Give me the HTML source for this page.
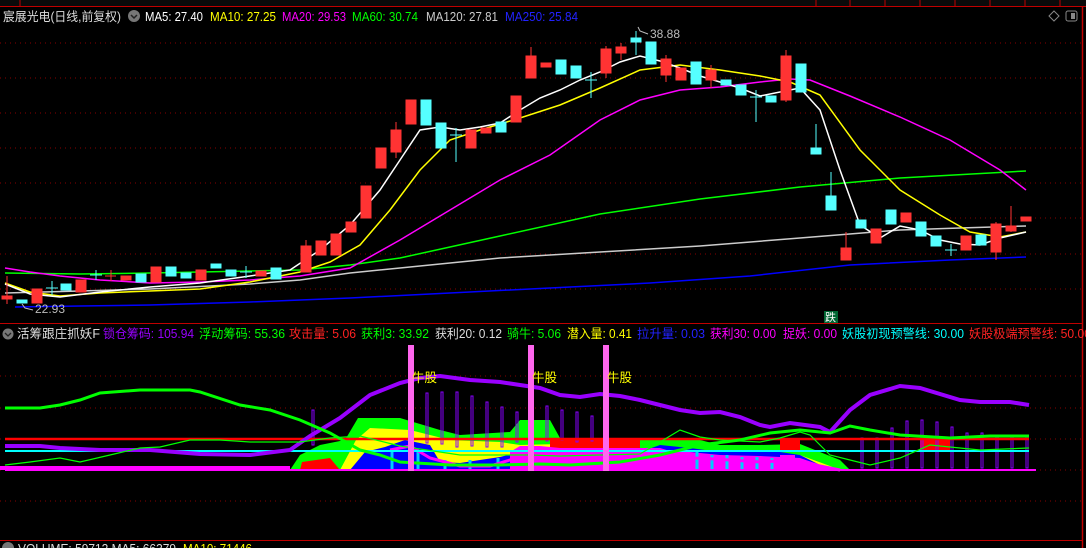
<!DOCTYPE html><html><head><meta charset="utf-8"><style>
html,body{margin:0;padding:0;background:#000;width:1086px;height:548px;overflow:hidden}
svg{display:block}
text{font-family:"Liberation Sans","Noto Sans CJK SC",sans-serif}
</style></head><body>
<svg width="1086" height="548" viewBox="0 0 1086 548" xmlns="http://www.w3.org/2000/svg">
<rect width="1086" height="548" fill="#000"/>
<rect x="0" y="0" width="1086" height="6" fill="#0a0a0a"/>
<line x1="0" y1="6.5" x2="1086" y2="6.5" stroke="#c00000"/>
<g stroke="#c00000"><line x1="20" y1="0" x2="20" y2="6"/><line x1="816" y1="0" x2="816" y2="6"/><line x1="850" y1="0" x2="850" y2="6"/><line x1="885" y1="0" x2="885" y2="6"/><line x1="920" y1="0" x2="920" y2="6"/><line x1="955" y1="0" x2="955" y2="6"/><line x1="990" y1="0" x2="990" y2="6"/><line x1="1025" y1="0" x2="1025" y2="6"/><line x1="1060" y1="0" x2="1060" y2="6"/></g>
<line x1="1082.5" y1="6" x2="1082.5" y2="548" stroke="#c00000" stroke-width="1.5"/>
<g font-size="12.5">
<text x="3" y="21" fill="#ddd" textLength="118" lengthAdjust="spacingAndGlyphs">宸展光电(日线,前复权)</text>
<text x="145" y="21" fill="#fff" textLength="58" lengthAdjust="spacingAndGlyphs">MA5: 27.40</text>
<text x="210" y="21" fill="#ff0" textLength="66" lengthAdjust="spacingAndGlyphs">MA10: 27.25</text>
<text x="282" y="21" fill="#f0f" textLength="64" lengthAdjust="spacingAndGlyphs">MA20: 29.53</text>
<text x="352" y="21" fill="#0f0" textLength="66" lengthAdjust="spacingAndGlyphs">MA60: 30.74</text>
<text x="426" y="21" fill="#ccc" textLength="72" lengthAdjust="spacingAndGlyphs">MA120: 27.81</text>
<text x="505" y="21" fill="#22f" textLength="73" lengthAdjust="spacingAndGlyphs">MA250: 25.84</text>
</g>
<circle cx="134" cy="16" r="6" fill="#777"/><path d="M131 15 l3 3 l3 -3" stroke="#222" fill="none" stroke-width="1.5"/>
<path d="M1054 11 l5 5 l-5 5 l-5 -5z" stroke="#888" fill="none"/>
<rect x="1066" y="11" width="11" height="10" rx="2" stroke="#888" fill="none"/><rect x="1071" y="13" width="4" height="6" fill="#888"/>
<g stroke="#800" stroke-dasharray="1,4">
<line x1="0" y1="43" x2="1082" y2="43"/><line x1="0" y1="78" x2="1082" y2="78"/><line x1="0" y1="113" x2="1082" y2="113"/><line x1="0" y1="148" x2="1082" y2="148"/><line x1="0" y1="183" x2="1082" y2="183"/><line x1="0" y1="218" x2="1082" y2="218"/><line x1="0" y1="254" x2="1082" y2="254"/><line x1="0" y1="289" x2="1082" y2="289"/>
</g>
<polyline fill="none" stroke="#00f" stroke-width="1.5" points="15,307 80,306 150,305 250,302 350,298 450,293 550,288 650,283 750,276 850,265 950,260 1026,257"/>
<polyline fill="none" stroke="#ccc" stroke-width="1.5" points="5,293 80,291 150,289 250,284 300,280 350,273 400,268 450,263 500,258 600,252 700,246 800,238 900,230 960,228 1026,226"/>
<polyline fill="none" stroke="#0f0" stroke-width="1.5" points="5,273 80,274 150,273 250,271 300,270 350,265 400,258 450,247 500,236 600,214 700,199 800,187 900,178 1026,171"/>
<polyline fill="none" stroke="#f0f" stroke-width="1.5" points="5,268 30,272 60,276 100,280 150,283 200,282 250,280 300,276 350,268 400,240 450,210 500,180 550,155 600,120 640,100 680,90 720,87 760,82 790,79 810,80 850,96 900,117 950,140 1000,170 1026,190"/>
<polyline fill="none" stroke="#ff0" stroke-width="1.5" points="5,283 30,292 60,296 100,293 150,291 200,289 250,282 300,272 330,262 360,245 390,210 420,170 450,140 480,130 520,118 560,105 600,88 640,70 680,65 720,70 760,76 790,82 820,95 860,150 900,190 940,215 970,232 1000,237 1026,232"/>
<polyline fill="none" stroke="#fff" stroke-width="1.5" points="5,284 30,294 60,297 100,292 150,287 200,283 250,276 290,270 320,250 350,225 380,190 400,160 420,130 440,127 460,130 480,127 500,123 520,110 540,98 560,90 580,80 600,72 620,62 640,56 660,61 680,68 700,76 720,82 740,88 760,96 780,92 800,88 820,110 840,170 860,225 880,238 900,226 920,230 940,240 960,244 980,245 1000,238 1026,232"/>
<g stroke-width="1">
<g fill="#f33" stroke="#f33">
<line x1="7" y1="276" x2="7" y2="304"/><rect x="2" y="296" width="10" height="3"/>
<rect x="32" y="289" width="10" height="14"/>
<rect x="76" y="280" width="10" height="12"/>
<rect x="121" y="276" width="10" height="4"/><line x1="111" y1="270" x2="111" y2="281"/><line x1="105" y1="276" x2="116" y2="276"/>
<rect x="151" y="267" width="10" height="15"/>
<rect x="196" y="270" width="10" height="10"/>
<rect x="256" y="271" width="10" height="5"/>
<rect x="301" y="246" width="10" height="26"/><line x1="306" y1="240" x2="306" y2="272"/>
<rect x="316" y="241" width="10" height="14"/>
<rect x="331" y="234" width="10" height="21"/>
<rect x="346" y="222" width="10" height="10"/>
<rect x="361" y="186" width="10" height="32"/>
<rect x="376" y="148" width="10" height="20"/>
<rect x="391" y="130" width="10" height="22"/><line x1="396" y1="122" x2="396" y2="158"/>
<rect x="406" y="100" width="10" height="24"/>
<rect x="466" y="130" width="10" height="18"/>
<rect x="481" y="128" width="10" height="5"/>
<rect x="511" y="96" width="10" height="26"/>
<rect x="526" y="56" width="10" height="22"/><line x1="531" y1="47" x2="531" y2="78"/>
<rect x="541" y="63" width="10" height="4"/>
<rect x="601" y="49" width="10" height="24"/><line x1="606" y1="46" x2="606" y2="78"/>
<rect x="616" y="47" width="10" height="6"/><line x1="621" y1="43" x2="621" y2="60"/>
<rect x="661" y="59" width="10" height="16"/><line x1="666" y1="55" x2="666" y2="82"/>
<rect x="676" y="68" width="10" height="12"/>
<rect x="706" y="70" width="10" height="10"/><line x1="711" y1="65" x2="711" y2="88"/>
<rect x="781" y="56" width="10" height="44"/><line x1="786" y1="50" x2="786" y2="102"/>
<rect x="841" y="248" width="10" height="12"/><line x1="846" y1="232" x2="846" y2="260"/>
<rect x="871" y="229" width="10" height="14"/>
<rect x="901" y="213" width="10" height="9"/>
<rect x="961" y="236" width="10" height="14"/>
<rect x="991" y="224" width="10" height="28"/><line x1="996" y1="222" x2="996" y2="260"/>
<rect x="1006" y="226" width="10" height="5"/><line x1="1011" y1="206" x2="1011" y2="232"/>
<rect x="1021" y="217" width="10" height="4"/>
</g>
<g fill="#5ff" stroke="#5ff">
<rect x="17" y="300" width="10" height="3"/>
<line x1="52" y1="281" x2="52" y2="295"/><line x1="46" y1="288" x2="58" y2="288"/>
<rect x="61" y="284" width="10" height="6"/>
<line x1="96" y1="270" x2="96" y2="280"/><line x1="90" y1="275" x2="102" y2="275"/>
<rect x="136" y="274" width="10" height="8"/>
<rect x="166" y="267" width="10" height="9"/>
<rect x="181" y="273" width="10" height="5"/>
<rect x="211" y="264" width="10" height="4"/>
<rect x="226" y="270" width="10" height="6"/>
<line x1="246" y1="266" x2="246" y2="278"/><line x1="240" y1="272" x2="252" y2="272"/>
<rect x="271" y="268" width="10" height="11"/>
<rect x="421" y="100" width="10" height="25"/>
<rect x="436" y="123" width="10" height="25"/>
<line x1="456" y1="128" x2="456" y2="162"/><line x1="450" y1="135" x2="462" y2="135"/>
<rect x="496" y="122" width="10" height="10"/>
<rect x="556" y="60" width="10" height="14"/>
<rect x="571" y="66" width="10" height="12"/>
<line x1="591" y1="72" x2="591" y2="98"/><line x1="585" y1="80" x2="597" y2="80"/>
<rect x="631" y="38" width="10" height="4"/><line x1="636" y1="31" x2="636" y2="55"/>
<rect x="646" y="42" width="10" height="22"/>
<rect x="691" y="62" width="10" height="22"/>
<rect x="721" y="80" width="10" height="5"/>
<rect x="736" y="85" width="10" height="10"/>
<line x1="756" y1="90" x2="756" y2="122"/><line x1="750" y1="97" x2="762" y2="97"/>
<rect x="766" y="96" width="10" height="6"/>
<rect x="796" y="64" width="10" height="28"/>
<rect x="811" y="148" width="10" height="6"/><line x1="816" y1="124" x2="816" y2="154"/>
<rect x="826" y="196" width="10" height="14"/><line x1="831" y1="172" x2="831" y2="210"/>
<rect x="856" y="220" width="10" height="8"/>
<rect x="886" y="210" width="10" height="14"/>
<rect x="916" y="222" width="10" height="14"/>
<rect x="931" y="236" width="10" height="10"/>
<line x1="951" y1="244" x2="951" y2="256"/><line x1="945" y1="250" x2="957" y2="250"/>
<rect x="976" y="235" width="10" height="10"/>
</g>
</g>
<text x="650" y="38" font-size="12" fill="#bbb">38.88</text><path d="M638 27 l2 4 l8 3" stroke="#bbb" fill="none"/>
<text x="35" y="313" font-size="12" fill="#bbb">22.93</text><path d="M22 304 l3 4 l8 2" stroke="#bbb" fill="none"/>
<rect x="824" y="311" width="14" height="12" fill="#063"/><text x="825" y="321" font-size="11" fill="#fff">跌</text>
<line x1="0" y1="323.5" x2="1082" y2="323.5" stroke="#c00000"/>
<circle cx="8" cy="334" r="5.5" fill="#777"/><path d="M5 333 l3 3 l3 -3" stroke="#222" fill="none" stroke-width="1.3"/>
<g font-size="12.5">
<text x="17" y="338" fill="#ddd" textLength="83" lengthAdjust="spacingAndGlyphs">活筹跟庄抓妖F</text>
<text x="103" y="338" fill="#90f" textLength="91" lengthAdjust="spacingAndGlyphs">锁仓筹码: 105.94</text>
<text x="199" y="338" fill="#0f0" textLength="86" lengthAdjust="spacingAndGlyphs">浮动筹码: 55.36</text>
<text x="289" y="338" fill="#f22" textLength="67" lengthAdjust="spacingAndGlyphs">攻击量: 5.06</text>
<text x="361" y="338" fill="#0f0" textLength="68" lengthAdjust="spacingAndGlyphs">获利3: 33.92</text>
<text x="435" y="338" fill="#ddd" textLength="67" lengthAdjust="spacingAndGlyphs">获利20: 0.12</text>
<text x="507" y="338" fill="#0f0" textLength="54" lengthAdjust="spacingAndGlyphs">骑牛: 5.06</text>
<text x="567" y="338" fill="#ff0" textLength="65" lengthAdjust="spacingAndGlyphs">潜入量: 0.41</text>
<text x="637" y="338" fill="#22f" textLength="68" lengthAdjust="spacingAndGlyphs">拉升量: 0.03</text>
<text x="710" y="338" fill="#f0f" textLength="66" lengthAdjust="spacingAndGlyphs">获利30: 0.00</text>
<text x="783" y="338" fill="#f0f" textLength="54" lengthAdjust="spacingAndGlyphs">捉妖: 0.00</text>
<text x="842" y="338" fill="#0ff" textLength="122" lengthAdjust="spacingAndGlyphs">妖股初现预警线: 30.00</text>
<text x="969" y="338" fill="#f22" textLength="122" lengthAdjust="spacingAndGlyphs">妖股极端预警线: 50.00</text>
</g>
<g stroke="#800" stroke-dasharray="1,4">
<line x1="0" y1="376" x2="1082" y2="376"/><line x1="0" y1="408" x2="1082" y2="408"/><line x1="0" y1="439" x2="1082" y2="439"/><line x1="0" y1="470" x2="1082" y2="470"/><line x1="0" y1="501" x2="1082" y2="501"/>
</g>
<line x1="0" y1="540.5" x2="1082" y2="540.5" stroke="#c00000"/>
<polygon fill="#0f0" points="290,470 300,455 320,445 345,440 358,418 400,418 440,430 460,435 510,432 520,420 550,420 560,438 600,440 650,440 700,440 720,445 760,445 800,444 840,460 850,470"/>
<polygon fill="#ff0" points="340,470 356,440 370,428 410,430 450,440 500,442 520,445 560,444 600,448 650,448 700,452 760,452 800,455 830,466 840,470"/>
<polygon fill="#f00" points="300,470 302,462 330,458 340,470"/>
<polygon fill="#f00" points="550,440 640,440 640,448 550,448"/><polygon fill="#f00" points="780,440 800,440 800,450 780,450"/><polygon fill="#f00" points="920,440 950,440 950,452 920,452"/>
<polygon fill="#00f" points="350,470 365,452 385,447 405,440 430,445 440,462 460,463 500,457 520,452 560,452 600,456 640,452 660,445 690,448 720,452 780,452 800,455 820,465 830,470"/>
<polygon fill="#f0f" points="510,470 510,452 520,446 540,446 560,448 620,448 660,448 700,460 700,470"/><polygon fill="#f0f" points="780,470 780,455 795,455 795,470"/>
<polygon fill="#f0f" points="0,470 0,466 290,466 290,470"/><polygon fill="#f0f" points="660,470 660,452 690,452 720,455 760,456 800,458 820,465 840,470"/>
<g stroke="#0cf" stroke-width="3"><line x1="392" y1="450" x2="392" y2="470"/><line x1="418" y1="452" x2="418" y2="470"/><line x1="445" y1="460" x2="445" y2="470"/><line x1="470" y1="460" x2="470" y2="470"/><line x1="498" y1="458" x2="498" y2="470"/><line x1="697" y1="452" x2="697" y2="470"/><line x1="712" y1="455" x2="712" y2="470"/><line x1="727" y1="455" x2="727" y2="470"/><line x1="742" y1="457" x2="742" y2="470"/><line x1="757" y1="457" x2="757" y2="470"/><line x1="772" y1="458" x2="772" y2="470"/></g>
<polyline fill="none" stroke="#f0f" stroke-width="3" points="390,450 410,446 430,458 460,466 490,466 510,460 540,460 600,464 620,455 660,460 700,458 760,462 800,460 820,466 840,470"/>
<g stroke="#80f" fill="none"><rect x="426" y="393" width="2" height="50"/><rect x="441" y="392" width="2" height="52"/><rect x="456" y="392" width="2" height="55"/><rect x="471" y="396" width="2" height="50"/><rect x="486" y="402" width="2" height="45"/><rect x="501" y="407" width="2" height="40"/><rect x="516" y="412" width="2" height="30"/><rect x="546" y="406" width="2" height="35"/><rect x="561" y="410" width="2" height="30"/><rect x="576" y="412" width="2" height="30"/><rect x="591" y="416" width="2" height="25"/><rect x="312" y="410" width="2" height="35"/><rect x="861" y="438" width="2" height="30"/><rect x="876" y="438" width="2" height="30"/><rect x="891" y="428" width="2" height="40"/><rect x="906" y="421" width="2" height="47"/><rect x="921" y="420" width="2" height="48"/><rect x="936" y="422" width="2" height="46"/><rect x="951" y="427" width="2" height="41"/><rect x="966" y="433" width="2" height="35"/><rect x="981" y="433" width="2" height="35"/><rect x="996" y="436" width="2" height="32"/><rect x="1011" y="436" width="2" height="32"/><rect x="1026" y="436" width="2" height="32"/></g>
<line x1="5" y1="439" x2="1029" y2="439" stroke="#f00" stroke-width="2.5"/>
<line x1="5" y1="451" x2="1029" y2="451" stroke="#0ff" stroke-width="2"/>
<line x1="5" y1="470" x2="1036" y2="470" stroke="#f0f" stroke-width="2"/>
<polyline fill="none" stroke="#90f" stroke-width="4" points="5,446 40,446 60,448 100,450 150,450 200,454 250,455 290,450 310,436 340,418 370,395 400,383 420,378 440,376 470,380 500,382 520,385 540,388 560,395 580,397 600,394 620,396 640,400 660,405 680,410 700,413 720,412 740,417 760,425 770,427 790,423 820,427 830,432 850,410 870,395 900,386 920,388 960,400 980,402 1010,402 1029,405"/>
<polyline fill="none" stroke="#0f0" stroke-width="3" points="5,408 40,408 60,405 80,400 100,393 140,390 190,390 200,392 240,405 270,410 300,420 330,433 360,450 380,455 400,462 450,465 500,465 540,464 570,465 620,462 660,455 700,445 740,440 770,433 800,430 830,433 850,426 870,430 900,435 950,438 990,436 1029,436"/>
<polyline fill="none" stroke="#0f0" stroke-width="1.2" points="5,465 30,462 60,458 80,462 110,455 140,448 160,447 190,440 220,440 250,442 300,442 330,438 360,436 400,446 440,452 460,455 500,455 530,455 560,456 600,455 640,454 680,430 700,437 720,440 760,442 780,438 800,432 810,435 830,455 850,460 870,465 900,458 930,445 980,450 1029,448"/>
<g fill="#f6e"><rect x="408" y="345" width="6" height="126"/><rect x="528" y="345" width="6" height="126"/><rect x="603" y="345" width="6" height="126"/></g>
<text y="382" font-size="12.5" fill="#ff0"><tspan x="412">牛股</tspan><tspan x="532">牛股</tspan><tspan x="607">牛股</tspan></text>
<circle cx="8" cy="548" r="6" fill="#777"/>
<text x="18" y="553" font-size="12.5" fill="#ddd" textLength="158" lengthAdjust="spacingAndGlyphs">VOLUME: 59712 MA5: 66379</text>
<text x="183" y="553" font-size="12.5" fill="#ff0" textLength="69" lengthAdjust="spacingAndGlyphs">MA10: 71446</text>
</svg>
</body></html>
